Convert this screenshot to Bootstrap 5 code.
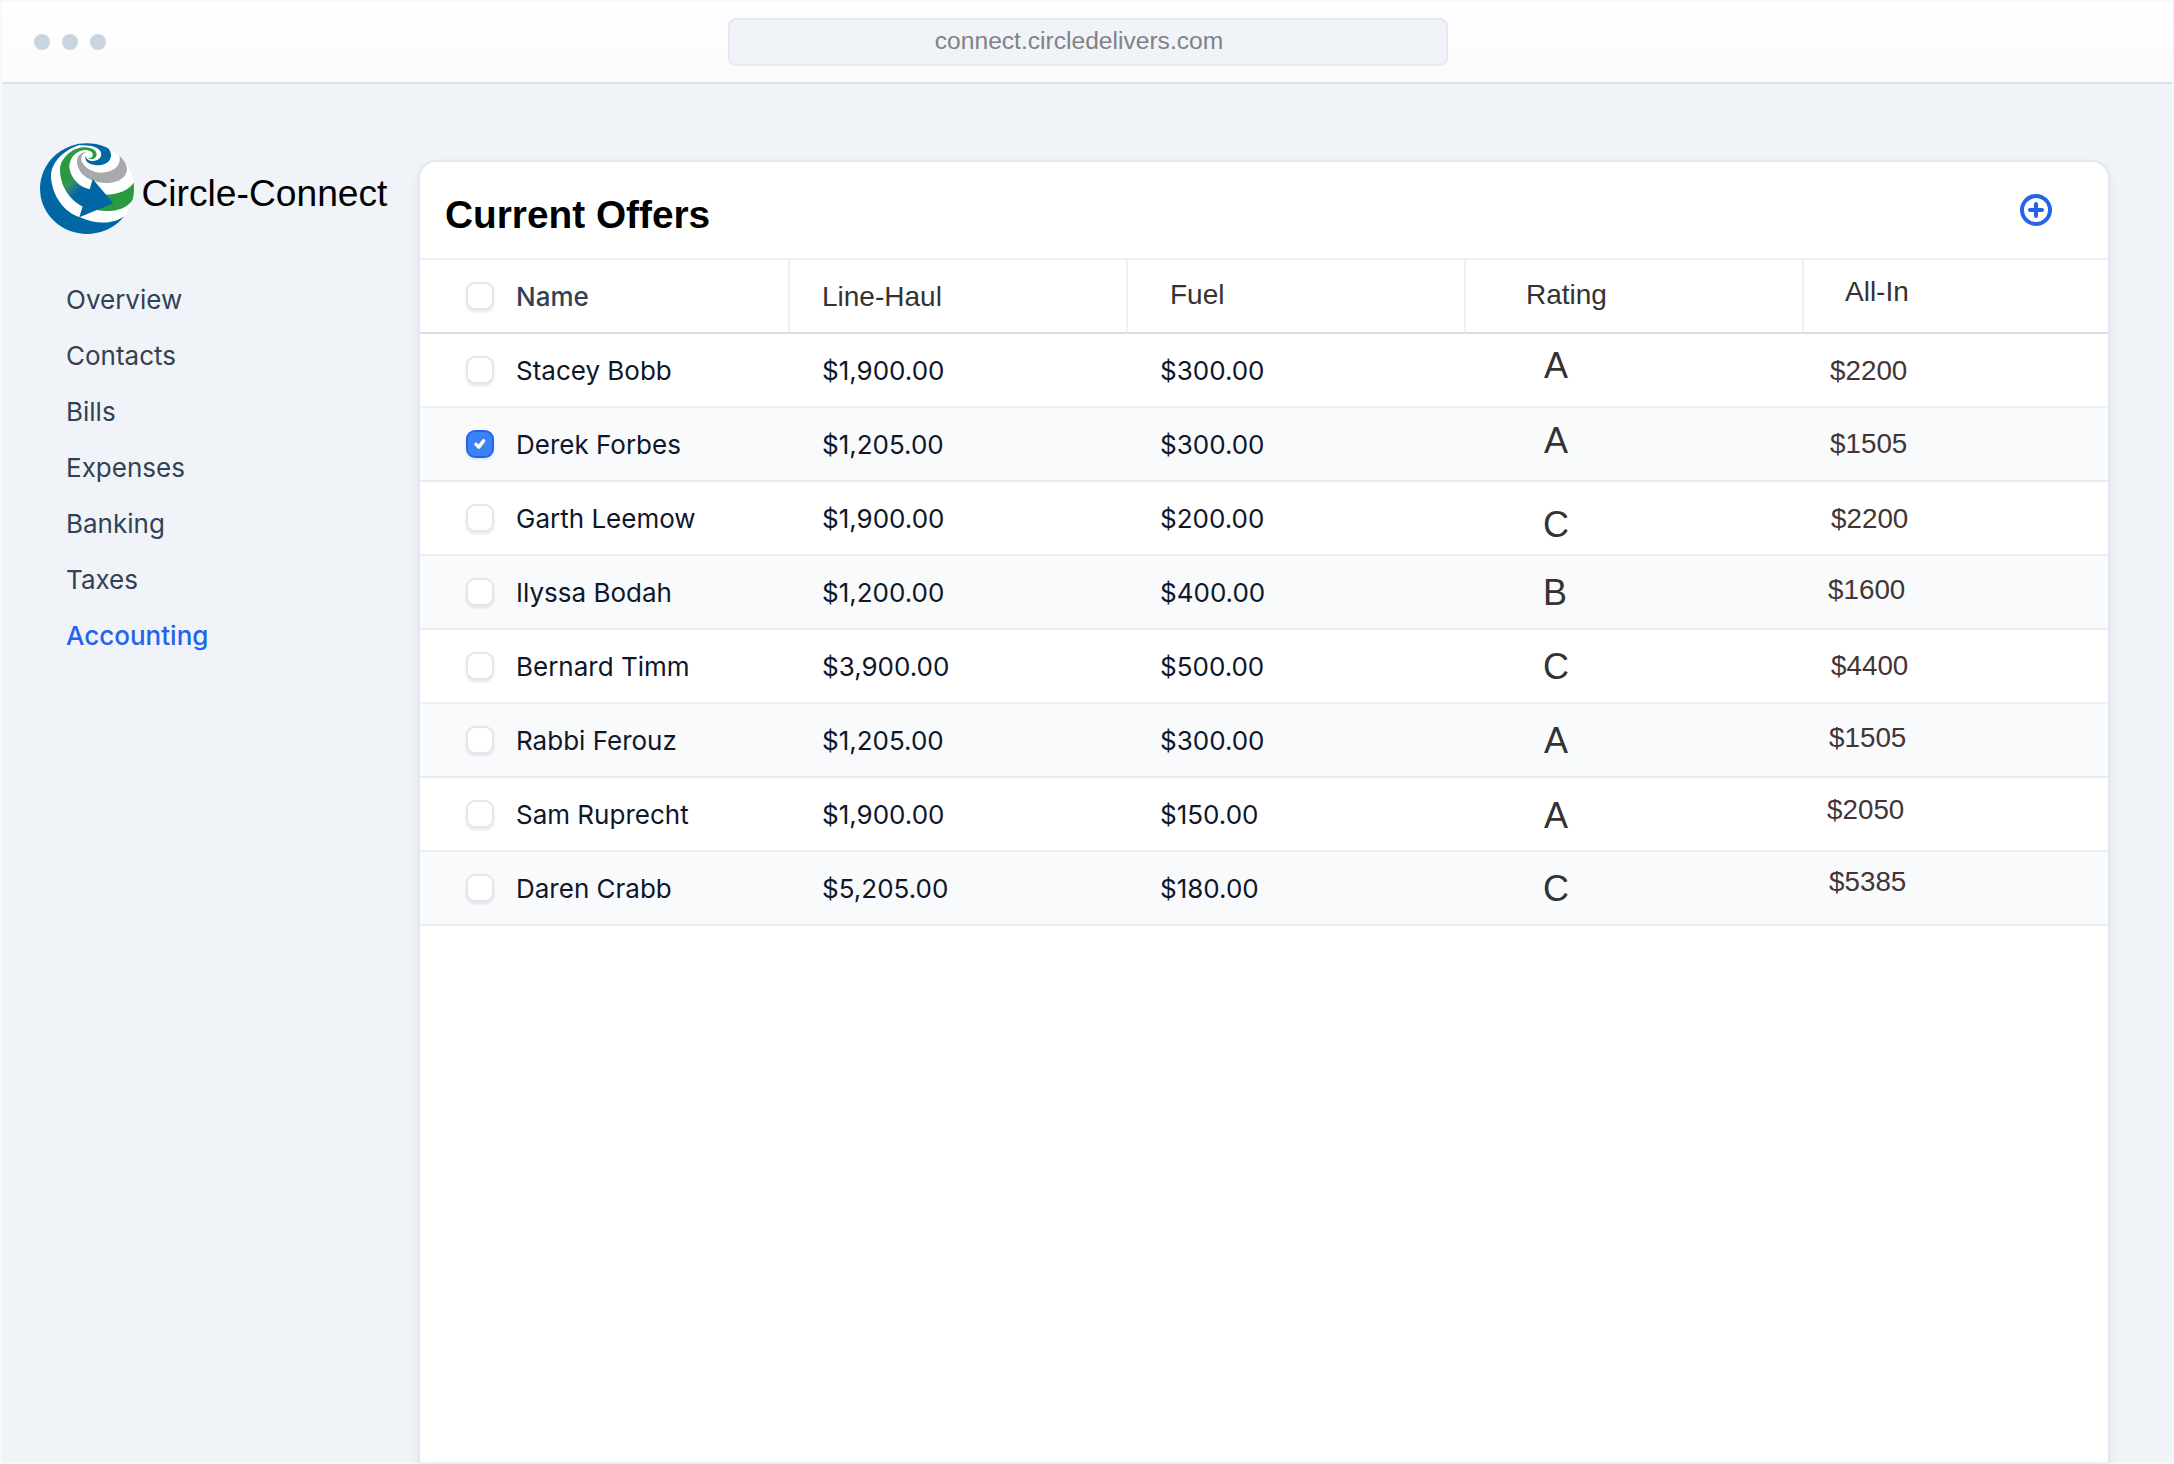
<!DOCTYPE html>
<html lang="en">
<head>
<meta charset="utf-8">
<title>Circle-Connect</title>
<link href="https://cdn.jsdelivr.net/npm/bootstrap@5.3.0/dist/css/bootstrap.min.css" rel="stylesheet">
<style>
html, body { height: 100%; }
body { font-family: Inter, "Noto Sans", sans-serif; font-size: 26px; line-height: 36px; color: #0f172a; overflow: hidden; }
.window { height: 1464px; border: 2px solid #f8f8f8; background: #f0f4f9; }
.titlebar { height: 82px; flex: none; background: linear-gradient(#fff, #fbfbfb); border-bottom: 2px solid #dce0e6; padding: 0 32px; }
.dots { gap: 12px; width: 694px; }
.dots i { width: 16px; height: 16px; border-radius: 50%; background: #cbd5e1; }
.address { width: 720px; height: 48px; border: 2px solid #e6eaf0; border-radius: 8px; background: #f0f3f8; font: 24.6px/42px "Liberation Sans", Arial, sans-serif; color: #808285; padding-right: 18px; }
.side { width: 416px; flex: none; padding: 46px 0 0 28px; }
.brand { height: 115px; font: 37.2px/42px "Liberation Sans", Arial, sans-serif; color: #000; white-space: nowrap; }
.brand svg { margin-right: -8.5px; }
.brand span { margin-top: 42px; }
.menu { padding: 27px 0 0 36px; }
.menu .nav-link { padding: 10px 0; height: 56px; color: #334155; }
.menu .nav-link.active { color: #2563eb; font-weight: 500; }
.panel { width: 1692px; margin-top: 76px; border: 2px solid #e2e8f0; border-bottom: 0; border-radius: 18px 18px 0 0; background: #fff; box-shadow: 0 4px 10px rgba(15, 23, 42, .07); }
.panel-title { height: 96px; padding: 0 54px 0 25px; }
.panel-title h1 { font: 700 38.8px/44px "Liberation Sans", Arial, sans-serif; color: #000; margin: 10px 0 0; }
.offers { table-layout: fixed; width: 1688px; border-collapse: separate; border-spacing: 0; margin: 0; }
.offers .col-name { width: 368px; }
.offers .col-std { width: 338px; }
.offers th, .offers td { padding: 19px 0 0 34px; vertical-align: top; height: 74px; border: 0; border-bottom: 2px solid #eff0f1; font-weight: 400; color: #0f172a; background: #fff; white-space: nowrap; }
.offers thead th { height: 76px; border-top: 2px solid #eff0f1; border-bottom: 2px solid #dcdcde; font: 28px/32px "Liberation Sans", Arial, sans-serif; color: #333; }
.offers thead th + th { border-left: 2px solid #f0f0f1; }
.offers tbody tr:nth-child(even) td { background: #f8fafc; border-bottom-color: #e9ebef; }
.offers th.who, .offers td.who { padding: 0 0 0 46px; }
.offers thead th.who { font: 500 26px/36px Inter, sans-serif; color: #334155; }
.who label { display: flex; align-items: center; gap: 22px; height: 72px; }
.who label span { padding-top: 2px; }
.offers .form-check-input { width: 28px; height: 28px; margin: 0; border: 2px solid #e4e6eb; border-radius: 9px; background-color: #fff; box-shadow: 0 2px 3px rgba(15, 23, 42, .1); flex: none; }
.offers .form-check-input:checked { border-color: #2563eb; background-color: #3b82f6; background-size: 24px; background-image: url("data:image/svg+xml,%3csvg xmlns='http://www.w3.org/2000/svg' viewBox='0 0 24 24'%3e%3cpath fill='none' stroke='%23fff' stroke-width='3.5' stroke-linecap='round' stroke-linejoin='round' d='M8 12.3l2.8 2.8 4.8-6.3'/%3e%3c/svg%3e"); }
.offers tbody td.grade { font: 36px/40px "Liberation Sans", Arial, sans-serif; color: #333; padding: 12px 0 0 80px; }
.offers tbody td.grade.g-c { padding-left: 79px; }
.offers tbody td.total { font: 27.8px/32px "Liberation Sans", Arial, sans-serif; color: #433536; padding: 21px 0 0 28px; }
.offers thead th.h-haul { padding: 21px 0 0 32px; }
.offers thead th.h-fuel { padding: 19px 0 0 42px; }
.offers thead th.h-rate { padding: 19px 0 0 60px; }
.offers thead th.h-all { padding: 16px 0 0 41px; }
.offers tr:nth-child(2) td.grade { padding-top: 13px; }
.offers tr:nth-child(3) td.grade { padding-top: 23px; }
.offers tr:nth-child(4) td.grade { padding-top: 17px; }
.offers tr:nth-child(5) td.grade { padding-top: 17px; }
.offers tr:nth-child(6) td.grade { padding-top: 17px; }
.offers tr:nth-child(7) td.grade { padding-top: 18px; }
.offers tr:nth-child(8) td.grade { padding-top: 17px; }
.offers tr:nth-child(2) td.total { padding-top: 20px; }
.offers tr:nth-child(3) td.total { padding: 21px 0 0 29px; }
.offers tr:nth-child(4) td.total { padding: 18px 0 0 26px; }
.offers tr:nth-child(5) td.total { padding: 20px 0 0 29px; }
.offers tr:nth-child(6) td.total { padding: 18px 0 0 27px; }
.offers tr:nth-child(7) td.total { padding: 16px 0 0 25px; }
.offers tr:nth-child(8) td.total { padding: 14px 0 0 27px; }
</style>
</head>
<body>
<div class="window d-flex flex-column">
  <header class="titlebar d-flex align-items-center">
    <div class="dots d-flex"><i></i><i></i><i></i></div>
    <div class="address text-center">connect.circledelivers.com</div>
  </header>
  <div class="d-flex flex-grow-1">
    <aside class="side">
      <div class="brand d-flex align-items-start">
        <svg class="flex-shrink-0" width="120" height="115" viewBox="0 0 360 345">
          <defs>
            <clipPath id="globe"><ellipse cx="171" cy="176" rx="141" ry="136"/></clipPath>
            <linearGradient id="fade" gradientUnits="userSpaceOnUse" x1="108" y1="146" x2="150" y2="182"><stop offset="0" stop-color="#2a9a41"/><stop offset=".3" stop-color="#3f8f62"/><stop offset="1" stop-color="#0066a4"/></linearGradient>
          </defs>
          <g clip-path="url(#globe)">
            <rect x="20" y="30" width="300" height="290" fill="#fff"/>
            <path fill="#0067a5" d="M20 30H160L150 44C95 62 63 100 63 140C66 195 100 245 150 262C200 285 250 282 285 258V330H20z"/>
            <path fill="#0067a5" d="M140 36L215 40C236 50 244 66 243 78C240 98 222 107 198 106C176 104 164 94 166 78C170 89 178 94 189 93C204 92 214 84 214 72C212 54 190 45 150 46z"/>
            <path fill="#2a9a41" d="M200 240C216 243 232 244 248 242C280 239 303 222 316 198V150C300 180 270 193 226 194z"/>
            <path fill="#a7a9ac" d="M268 76C284 92 291 106 291 120C288 142 270 156 235 159C190 159 152 142 142 105C137 80 150 66 172 66C156 70 150 82 156 96C166 116 190 128 215 128C250 126 276 108 268 76z"/>
            <path fill="#2a9a41" d="M173 82C180 92 198 88 200 74C200 60 183 51 160 52C125 55 90 85 90 120C90 165 118 208 158 230L178 178C150 174 118 140 118 108C120 80 140 62 164 60C182 60 190 68 188 77C186 84 178 86 173 82z"/>
            <path fill="url(#fade)" d="M96 152C104 186 128 214 158 229L148 262L250 220L188 147L179 178C158 172 142 164 134 150z"/>
          </g>
        </svg>
        <span>Circle-Connect</span>
      </div>
      <nav class="menu nav flex-column">
        <a class="nav-link" href="#">Overview</a>
        <a class="nav-link" href="#">Contacts</a>
        <a class="nav-link" href="#">Bills</a>
        <a class="nav-link" href="#">Expenses</a>
        <a class="nav-link" href="#">Banking</a>
        <a class="nav-link" href="#">Taxes</a>
        <a class="nav-link active" href="#">Accounting</a>
      </nav>
    </aside>
    <main class="panel">
      <div class="panel-title d-flex align-items-center justify-content-between">
        <h1>Current Offers</h1>
        <svg width="36" height="36" viewBox="0 0 36 36" fill="none" stroke="#2563eb" stroke-width="4" stroke-linecap="round"><circle cx="18" cy="18" r="14"/><path d="M18 12v12M12 18h12"/></svg>
      </div>
      <table class="offers">
        <colgroup><col class="col-name"><col class="col-std"><col class="col-std"><col class="col-std"><col></colgroup>
        <thead><tr><th class="who"><label><input class="form-check-input" type="checkbox"><span>Name</span></label></th><th class="h-haul">Line-Haul</th><th class="h-fuel">Fuel</th><th class="h-rate">Rating</th><th class="h-all">All-In</th></tr></thead>
        <tbody>
          <tr><td class="who"><label><input class="form-check-input" type="checkbox"><span>Stacey Bobb</span></label></td><td>$1,900.00</td><td>$300.00</td><td class="grade">A</td><td class="total">$2200</td></tr>
          <tr><td class="who"><label><input class="form-check-input" type="checkbox" checked><span>Derek Forbes</span></label></td><td>$1,205.00</td><td>$300.00</td><td class="grade">A</td><td class="total">$1505</td></tr>
          <tr><td class="who"><label><input class="form-check-input" type="checkbox"><span>Garth Leemow</span></label></td><td>$1,900.00</td><td>$200.00</td><td class="grade g-c">C</td><td class="total">$2200</td></tr>
          <tr><td class="who"><label><input class="form-check-input" type="checkbox"><span>Ilyssa Bodah</span></label></td><td>$1,200.00</td><td>$400.00</td><td class="grade g-c">B</td><td class="total">$1600</td></tr>
          <tr><td class="who"><label><input class="form-check-input" type="checkbox"><span>Bernard Timm</span></label></td><td>$3,900.00</td><td>$500.00</td><td class="grade g-c">C</td><td class="total">$4400</td></tr>
          <tr><td class="who"><label><input class="form-check-input" type="checkbox"><span>Rabbi Ferouz</span></label></td><td>$1,205.00</td><td>$300.00</td><td class="grade">A</td><td class="total">$1505</td></tr>
          <tr><td class="who"><label><input class="form-check-input" type="checkbox"><span>Sam Ruprecht</span></label></td><td>$1,900.00</td><td>$150.00</td><td class="grade">A</td><td class="total">$2050</td></tr>
          <tr><td class="who"><label><input class="form-check-input" type="checkbox"><span>Daren Crabb</span></label></td><td>$5,205.00</td><td>$180.00</td><td class="grade g-c">C</td><td class="total">$5385</td></tr>
        </tbody>
      </table>
    </main>
  </div>
</div>
<script src="https://cdn.jsdelivr.net/npm/bootstrap@5.3.0/dist/js/bootstrap.bundle.min.js"></script>
</body>
</html>
